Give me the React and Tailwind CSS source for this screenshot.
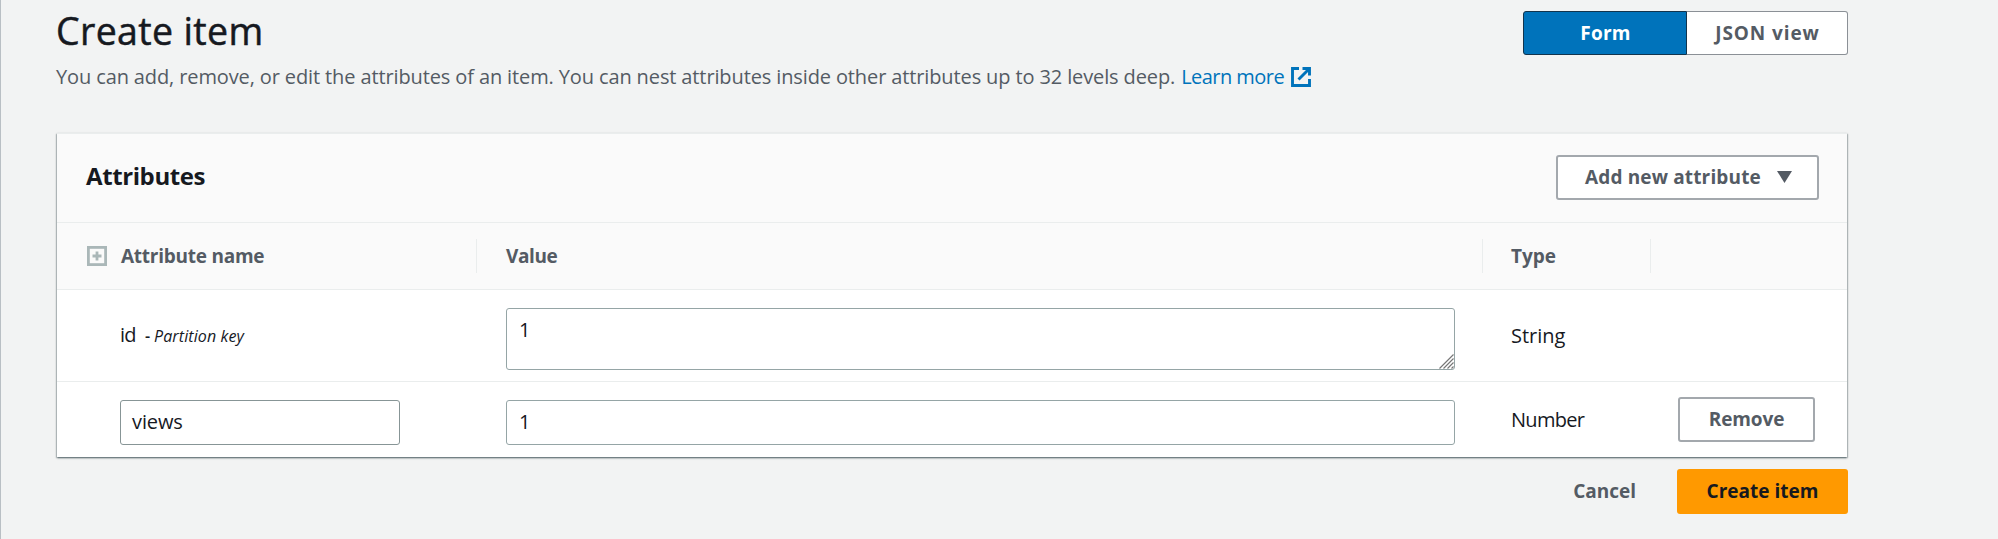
import React from 'react';

function ExternalIcon() {
  return (
    <svg viewBox="0 0 20 20" className="ml-[7px] h-5 w-5 shrink-0" fill="none" stroke="#0073bb" strokeWidth="2.9">
      <path d="M8 1.5H1.5V18.5H18.5V12" />
      <path d="M11.5 1.5H18.5V8.5M18 2L7.5 12.5" />
    </svg>
  );
}

function ExpandIcon() {
  return (
    <svg viewBox="0 0 20 20" className="h-5 w-5 shrink-0" fill="none" stroke="#aab7b8">
      <rect x="1.4" y="1.4" width="17.2" height="17.2" strokeWidth="2.8" />
      <path d="M10 5.5V14.5M5.5 10H14.5" strokeWidth="2.8" />
    </svg>
  );
}

function ResizeGrip() {
  return (
    <svg viewBox="0 0 15 15" className="absolute right-0 bottom-0 h-[15px] w-[15px]" stroke="#777" strokeWidth="1.2">
      <path d="M0.5 14.5L14.5 0.5M4.5 14.5L14.5 4.5M8.5 14.5L14.5 8.5M12.5 14.5L14.5 12.5" />
    </svg>
  );
}

const columns = 'grid grid-cols-[420px_1006px_168px_1fr]';

export default function App() {
  return (
    <div className="h-[539px] w-[1998px] overflow-hidden border-l border-[#b9bfc4] bg-[#f2f3f3] font-['Open_Sans',sans-serif] text-[20px] text-[#16191f]">
      <div className="ml-[56px] w-[1790px]">
        <header className="flex h-[133px] justify-between">
          <div className="-ml-px pt-[6px]">
            <h1 className="h-[50px] text-[37.5px] leading-[50px] tracking-[0.35px] [-webkit-text-stroke:0.5px_#16191f]">Create item</h1>
            <p className="mt-[5px] flex h-8 items-center whitespace-nowrap text-[#545b64]">
              <span className="tracking-[-0.12px]">
                You can add, remove, or edit the attributes of an item. You can nest attributes inside other attributes up to 32 levels deep.
              </span>
              <a className="ml-[6px] flex items-center tracking-[-0.55px] text-[#0073bb]">
                Learn more
                <ExternalIcon />
              </a>
            </p>
          </div>
          <div className="-mr-px mt-[11px] flex h-11 text-[19px] font-bold">
            <button className="w-[164px] rounded-l-[3px] border border-[#12344d] bg-[#0073bb] pl-px tracking-[0.2px] text-white">Form</button>
            <button className="w-[161px] rounded-r-[3px] border border-l-0 border-[#8b9096] bg-white pl-px tracking-[0.9px] text-[#545b64]">JSON view</button>
          </div>
        </header>

        <section className="h-[324px] bg-white shadow-[0_1px_2px_0_rgba(0,28,36,0.5),1px_1px_1px_0_rgba(0,28,36,0.15),-1px_1px_1px_0_rgba(0,28,36,0.15)]">
          <div className="flex h-[90px] items-center justify-between border-t border-b border-[#eaeded] bg-[#fafafa] pr-[28px] pl-[29px]">
            <h2 className="-mt-[4px] text-[24px] font-bold tracking-[-0.4px]">Attributes</h2>
            <button className="-mt-[2px] flex h-[45px] w-[263px] items-center rounded-[3px] border-2 border-[#a3a8ad] bg-white pl-[27px] text-[19px] font-bold tracking-[0.15px] whitespace-nowrap text-[#545b64]">
              Add new attribute
              <svg viewBox="0 0 15 12" className="ml-4 h-3 w-[15px]" fill="#545b64">
                <path d="M0 0H15L7.5 12Z" />
              </svg>
            </button>
          </div>

          <div className={`${columns} h-[67px] items-center border-b border-[#eaeded] bg-[#fafafa] text-[19px] font-bold text-[#545b64]`}>
            <div className="flex h-[34px] items-center border-r border-[#eaeded] pl-[30px] tracking-[-0.25px]">
              <ExpandIcon />
              <span className="ml-[14px]">Attribute name</span>
            </div>
            <div className="flex h-[34px] items-center border-r border-[#eaeded] pl-[29px] tracking-[-0.4px]">Value</div>
            <div className="flex h-[34px] items-center border-r border-[#eaeded] pl-[28px]">Type</div>
          </div>

          <div className={`${columns} h-[92px] items-center border-b border-[#eaeded]`}>
            <div className="flex items-baseline pb-px pl-[63px]">
              <span className="tracking-[-0.7px]">id</span>
              <span className="ml-[9px] text-[16px] font-semibold">-</span>
              <i className="ml-[4px] text-[16px] tracking-[0.1px]">Partition key</i>
            </div>
            <div className="pt-[6px] pl-[29px]">
              <div className="relative h-[62px] w-[949px] rounded-[3px] border border-[#95a5a6] bg-white pt-[6px] pl-[12px] leading-[30px]">
                1
                <ResizeGrip />
              </div>
            </div>
            <div className="pt-px pl-[28px]">String</div>
          </div>

          <div className={`${columns} h-[75px] items-start pt-[16px]`}>
            <div className="pt-[2px] pl-[63px]">
              <div className="flex h-[45px] w-[280px] items-center rounded-[3px] border border-[#879596] bg-white pb-[2px] pl-[11px] tracking-[-0.1px]">views</div>
            </div>
            <div className="pt-[2px] pl-[29px]">
              <div className="flex h-[45px] w-[949px] items-center rounded-[3px] border border-[#95a5a6] bg-white pb-[2px] pl-[12px]">1</div>
            </div>
            <div className="flex h-[43px] items-center pl-[28px] tracking-[-0.7px]">Number</div>
            <div className="-mt-px pl-[27px]">
              <button className="h-[45px] w-[137px] rounded-[3px] border-2 border-[#a3a8ad] bg-white text-[19px] font-bold tracking-[-0.1px] text-[#545b64]">Remove</button>
            </div>
          </div>
        </section>

        <footer className="-mr-px mt-[12px] flex h-[45px] items-center justify-end text-[19px] font-bold">
          <button className="mr-[41px] text-[#545b64]">Cancel</button>
          <button className="h-[45px] w-[171px] rounded-[3px] bg-[#ff9900]">Create item</button>
        </footer>
      </div>
    </div>
  );
}
